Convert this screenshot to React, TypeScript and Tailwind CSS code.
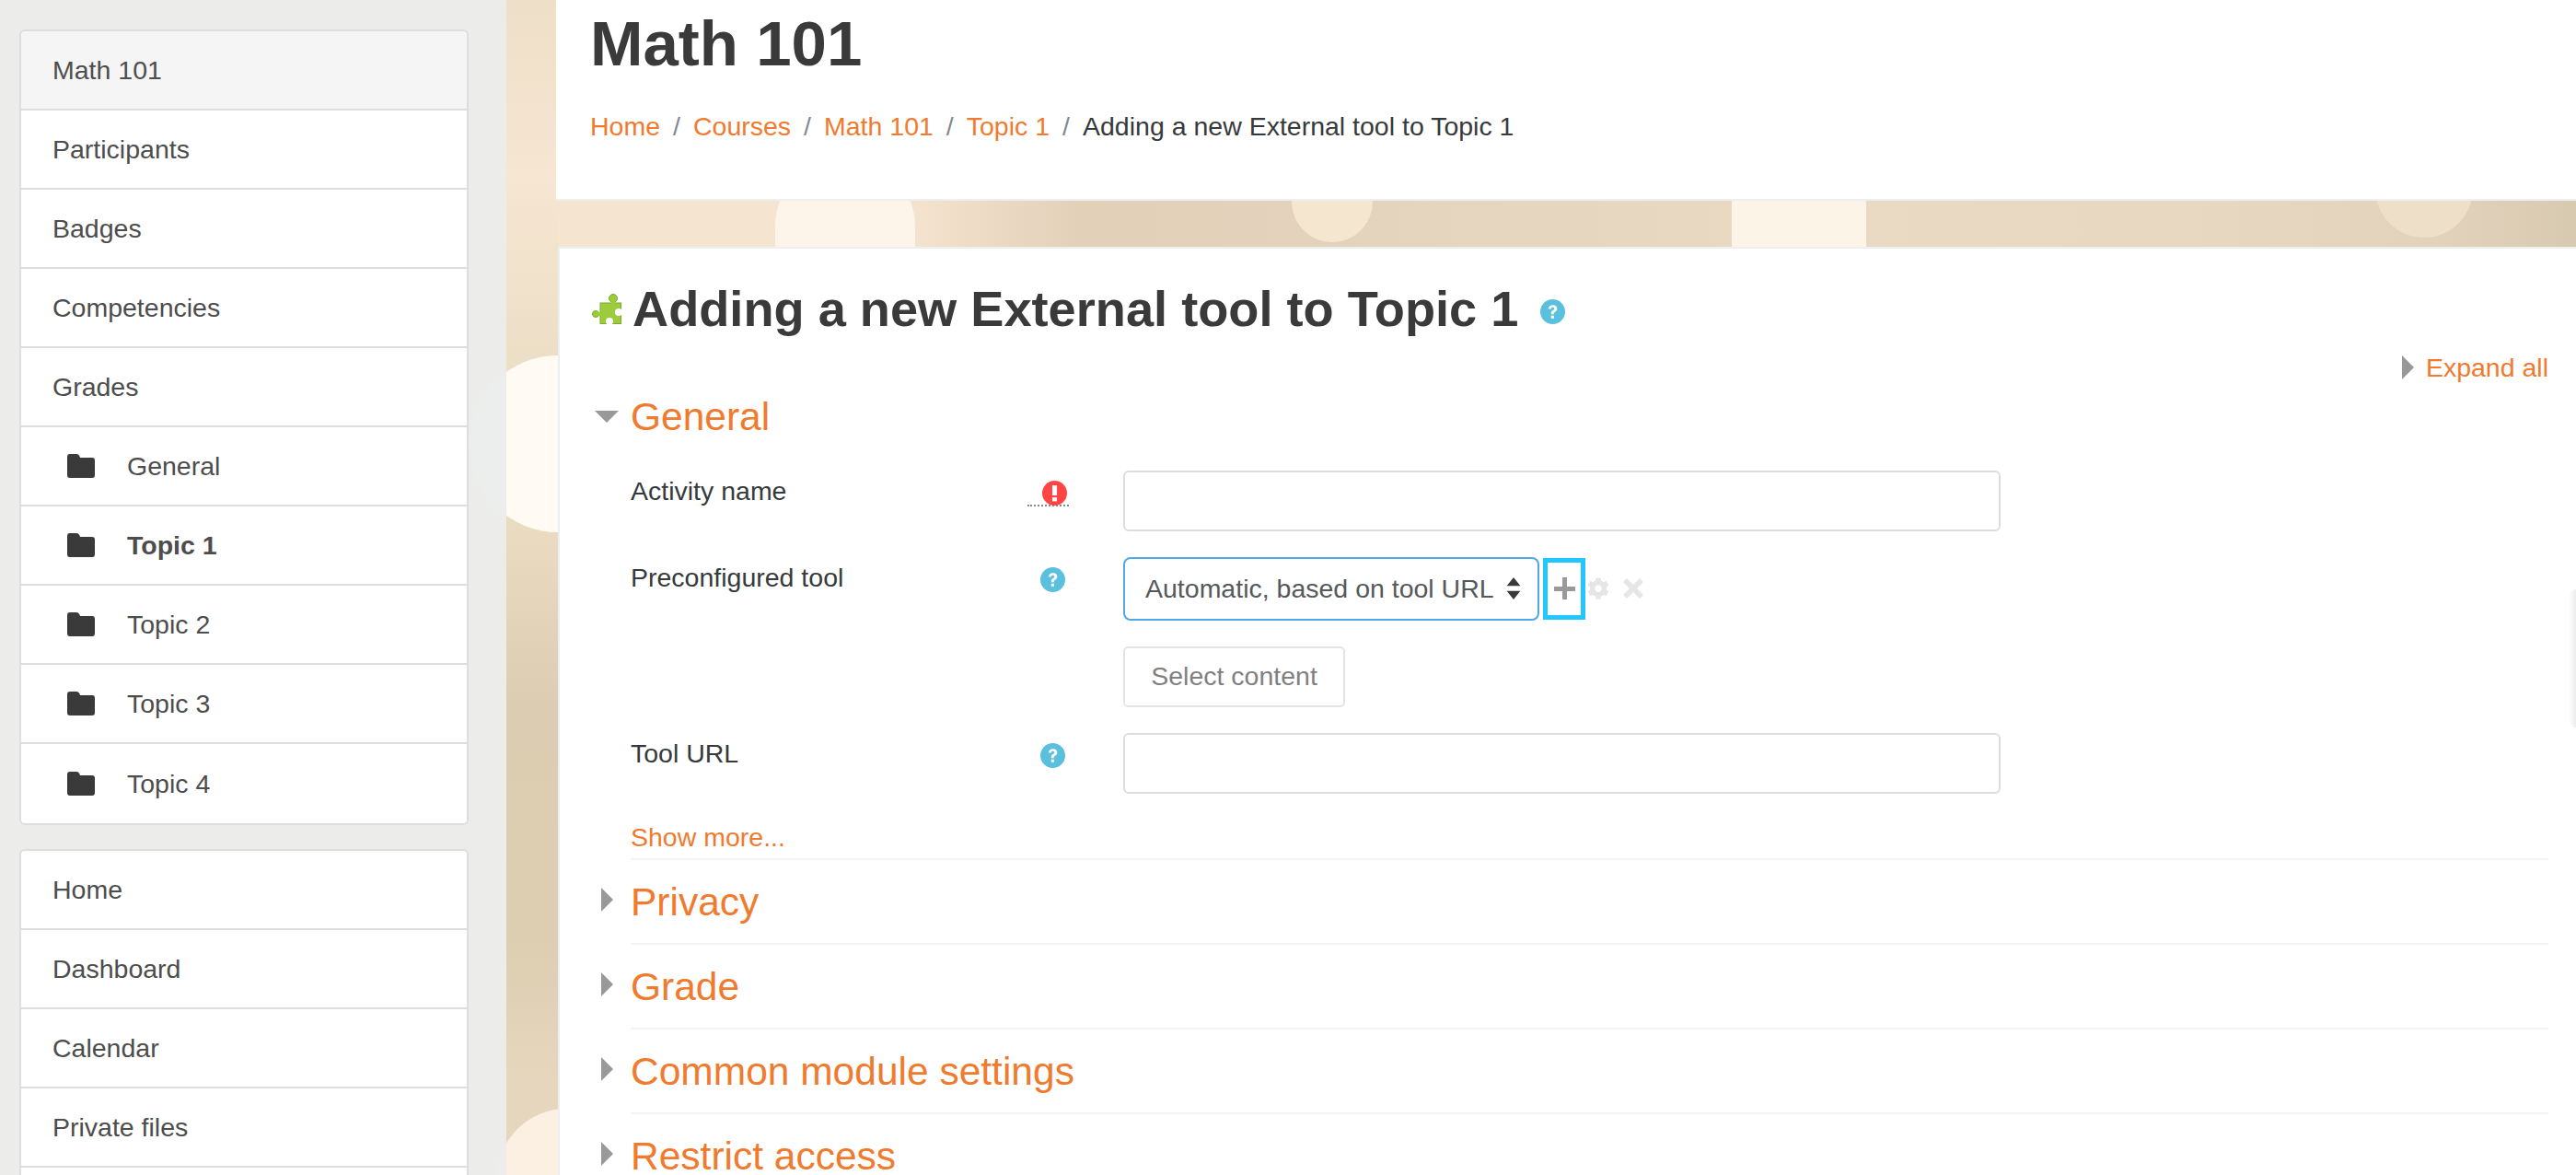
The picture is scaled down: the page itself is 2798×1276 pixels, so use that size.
import type { ReactNode } from 'react';
import { FaCog } from 'react-icons/fa';

const courseItems = ['Participants', 'Badges', 'Competencies', 'Grades'];
const topics = ['General', 'Topic 1', 'Topic 2', 'Topic 3', 'Topic 4'];
const siteItems = ['Home', 'Dashboard', 'Calendar', 'Private files', ''];
const crumbs = ['Home', 'Courses', 'Math 101', 'Topic 1'];
const sections = ['Privacy', 'Grade', 'Common module settings', 'Restrict access'];

const FolderIcon = () => (
  <svg viewBox="0 0 30 26" className="w-[30px] h-[26px] shrink-0 fill-[#3a3a3a]">
    <path d="M3 0h7c2 0 3 1 4 4h13c2 0 3 1 3 3v16c0 2-1 3-3 3H3c-2 0-3-1-3-3V3c0-2 1-3 3-3z" />
  </svg>
);

const TriangleRight = () => (
  <svg viewBox="0 0 13 26" className="w-[13px] h-[26px] shrink-0 fill-[#999]">
    <path d="M0 0l13 13L0 26z" />
  </svg>
);

const HelpIcon = () => (
  <svg viewBox="0 0 32 32" className="w-[27px] h-[27px]">
    <circle cx="16" cy="16" r="16" fill="#5bc0de" />
    <path d="M10.500 12.500c.3-3.200 2.600-5 5.700-5 3.200 0 5.500 1.900 5.500 4.600 0 2.300-1.400 3.300-2.800 4.300-1 .7-1.400 1.200-1.400 2.200v.6h-3.600v-1c0-1.900.8-2.900 2.200-3.900 1.100-.8 1.900-1.300 1.900-2.300 0-1-.8-1.600-1.900-1.600-1.200 0-2 .7-2.200 2.100z" fill="#fff" />
    <rect x="14" y="21" width="3.700" height="3.700" fill="#fff" />
  </svg>
);

const PuzzleIcon = () => (
  <svg viewBox="0 0 32 33" className="w-[32px] h-[33px] shrink-0">
    <g fill="#9ccc3c" stroke="#78ad24" strokeWidth="1">
      <circle cx="23" cy="5" r="4.500" />
      <circle cx="4" cy="22" r="3.500" />
      <rect x="9" y="10" width="22.500" height="22.500" />
    </g>
    <rect x="21" y="7" width="4" height="5" fill="#9ccc3c" />
    <rect x="6" y="20" width="5" height="4" fill="#9ccc3c" />
    <circle cx="29" cy="20" r="4" fill="#fff" />
    <circle cx="19" cy="30" r="4" fill="#fff" />
  </svg>
);

const SideRow = ({ label, shaded }: { label: string; shaded?: boolean }) => (
  <div className={`h-[86px] flex items-center pl-[34px] border-b-2 border-[#ddd] last:border-b-0 text-[28.5px] text-[#4d4d4d] ${shaded ? 'bg-[#f5f5f5]' : 'bg-white'}`}>
    {label}
  </div>
);

const TopicRow = ({ label }: { label: string }) => (
  <div className="h-[86px] flex items-center pl-[50px] gap-[35px] border-b-2 border-[#ddd] last:border-b-0 bg-white text-[28.5px] text-[#4d4d4d]">
    <FolderIcon />
    <span className={label === 'Topic 1' ? 'font-bold' : ''}>{label}</span>
  </div>
);

const FormRow = ({ label, icon, children, className }: { label: string; icon: ReactNode; children: ReactNode; className?: string }) => (
  <div className={`flex ${className ?? ''}`}>
    <div className="w-[577px] pl-[42px] pr-[63px] shrink-0 flex justify-between pt-[3px]">
      <span className="text-[#373a3c] leading-[38px]">{label}</span>
      <span className="mt-[8px]">{icon}</span>
    </div>
    <div>{children}</div>
  </div>
);

export default function App() {
  return (
    <div className="relative w-[2798px] h-[1276px] overflow-hidden flex bg-[linear-gradient(90deg,#f6e5d0_0%,#f5e4cf_35%,#e2d0b9_42%,#e4d3bc_52%,#e6d6c0_60%,#ead9c3_70%,#e8d8c2_85%,#e2d2bb_95%,#d8c9b1_100%)] font-['Liberation_Sans',Arial,sans-serif]">
      {/* bokeh spots in the page background */}
      <div className="absolute left-[510px] top-[386px] w-[230px] h-[192px] rounded-full bg-[#fffaf4]" />
      <div className="absolute left-[540px] top-[1204px] w-[200px] h-[150px] rounded-full bg-[#fbf0e1]" />
      <div className="absolute left-[842px] top-[170px] w-[152px] h-[190px] rounded-full bg-[#fdf5ea]" />
      <div className="absolute left-[1403px] top-[160px] w-[88px] h-[103px] rounded-full bg-[#f5e6cf]" />
      <div className="absolute left-[1881px] top-[150px] w-[146px] h-[190px] rounded-full bg-[#fdf4e8]" />
      <div className="absolute left-[2580px] top-[150px] w-[106px] h-[108px] rounded-full bg-[#eedfc9]" />

      <aside className="relative w-[550px] shrink-0 bg-[#ebecec]/95 pt-[32px] pl-[21px] pr-[41px]">
        <div className="rounded-[6px] border-2 border-[#ddd] overflow-hidden">
          <SideRow label="Math 101" shaded />
          {courseItems.map(item => <SideRow key={item} label={item} />)}
          {topics.map(t => <TopicRow key={t} label={t} />)}
        </div>
        <div className="mt-[26px] rounded-[6px] border-2 border-[#ddd] overflow-hidden">
          {siteItems.map((item, i) => <SideRow key={i} label={item} />)}
        </div>
      </aside>

      {/* strip of background between the side column and the page */}
      <div className="w-[56px] shrink-0 bg-[linear-gradient(180deg,#eedfc8_0%,#f6e6d2_15%,#eee0c8_28%,#eadbc0_46%,#dccdb2_60%,#ddceb2_80%,#e5d6bd_92%)]" />

      <main className="relative flex-1 flex flex-col gap-[50px]">
        <header className="h-[218px] -ml-[2px] bg-white border-b-2 border-[#eceeef] pl-[37px] shrink-0">
          <h1 className="text-[69px] leading-none font-bold text-[#3a3a3a] pt-[13px]">Math 101</h1>
          <nav className="mt-[34px] flex items-center text-[28.5px] text-[#f07a2e]">
            {crumbs.map(c => (
              <span key={c} className="flex">
                <span>{c}</span>
                <span className="mx-[14px] text-[#818a91]">/</span>
              </span>
            ))}
            <span className="text-[#373a3c]">Adding a new External tool to Topic 1</span>
          </nav>
        </header>

        <section className="flex-1 bg-white border-t-2 border-l-2 border-[#eceeef] pl-[35px] pr-[30px]">
          <div className="flex items-center pt-[30px]">
            <PuzzleIcon />
            <h2 className="ml-[12px] text-[54.2px] leading-[70px] font-bold text-[#3a3a3a]">Adding a new External tool to Topic 1</h2>
            <span className="ml-[24px] mt-[6px]"><HelpIcon /></span>
          </div>

          <div className="flex justify-end items-center gap-[13px] text-[28.5px] text-[#f07a2e] mt-[8px]">
            <TriangleRight />
            <span>Expand all</span>
          </div>

          <div className="flex items-center mt-[2px]">
            <svg viewBox="0 0 26 13" className="ml-[3px] w-[26px] h-[13px] fill-[#999]"><path d="M0 0h26L13 13z" /></svg>
            <h3 className="ml-[13px] text-[42.5px] leading-[60px] text-[#f07a2e]">General</h3>
          </div>

          <div className="text-[28.5px] mt-[28px]">
            <FormRow label="Activity name" icon={
              <span className="block border-b-2 border-dotted border-[#888] pl-[16px] pr-[2px] -mr-[4px]">
                <svg viewBox="0 0 32 32" className="w-[27px] h-[27px] -mb-[1px]">
                  <circle cx="16" cy="16" r="16" fill="#ff4444" />
                  <rect x="13" y="6" width="6" height="13" fill="#fff" />
                  <rect x="13" y="21.500" width="6" height="5" fill="#fff" />
                </svg>
              </span>
            }>
              <div className="w-[953px] h-[66px] border-2 border-[#ddd] rounded-[6px]" />
            </FormRow>

            <FormRow label="Preconfigured tool" className="mt-[28px]" icon={<HelpIcon />}>
              <div className="flex items-center">
                <div className="w-[452px] h-[69px] border-2 border-[#4fa8e6] rounded-[8px] flex items-center pl-[22px] text-[#55595c]">
                  <span className="flex-1">Automatic, based on tool URL</span>
                  <svg viewBox="0 0 16 26" className="w-[16px] h-[24px] mr-[18px] fill-[#3a3a3a]">
                    <path d="M8 0l8 10H0zM8 26L0 16h16z" />
                  </svg>
                </div>
                <div className="ml-[4px] w-[46px] h-[67px] border-[5px] border-[#22c7ff] flex items-center justify-center">
                  <svg viewBox="0 0 24 24" className="w-[24px] h-[24px] fill-[#999]"><path d="M10 0h5v10h9v5h-9v9h-5v-9H1v-5h9z" /></svg>
                </div>
                <FaCog className="ml-[2px] text-[24px] text-[#e6e6e6]" />
                <svg viewBox="0 0 24 24" className="ml-[14px] w-[24px] h-[24px] fill-[#e6e6e6]"><path d="M5 1l7 7 7-7 4 4-7 7 7 7-4 4-7-7-7 7-4-4 7-7-7-7z" /></svg>
              </div>
              <button className="block mt-[28px] w-[241px] h-[66px] border-2 border-[#e4e4e4] rounded-[5px] text-[#808080] text-center">
                Select content
              </button>
            </FormRow>

            <FormRow label="Tool URL" className="mt-[28px]" icon={<HelpIcon />}>
              <div className="w-[953px] h-[66px] border-2 border-[#ddd] rounded-[6px]" />
            </FormRow>

            <div className="pl-[42px] mt-[26px] text-[#f07a2e]">Show more...</div>
          </div>

          <div className="ml-[42px] mt-[1px]">
            {sections.map(s => (
              <div key={s} className="relative h-[92px] border-t-2 border-[#f3f3f3] flex items-center pt-[3px]">
                <span className="absolute -left-[32px] top-[30px]"><TriangleRight /></span>
                <span className="text-[42.5px] text-[#f07a2e]">{s}</span>
              </div>
            ))}
          </div>
        </section>

        {/* soft edge of the drawer handle at the right side */}
        <div className="absolute right-0 top-[640px] w-[8px] h-[150px] rounded-l-[8px] bg-[linear-gradient(90deg,#ffffff,#ececec)]" />
      </main>
    </div>
  );
}
